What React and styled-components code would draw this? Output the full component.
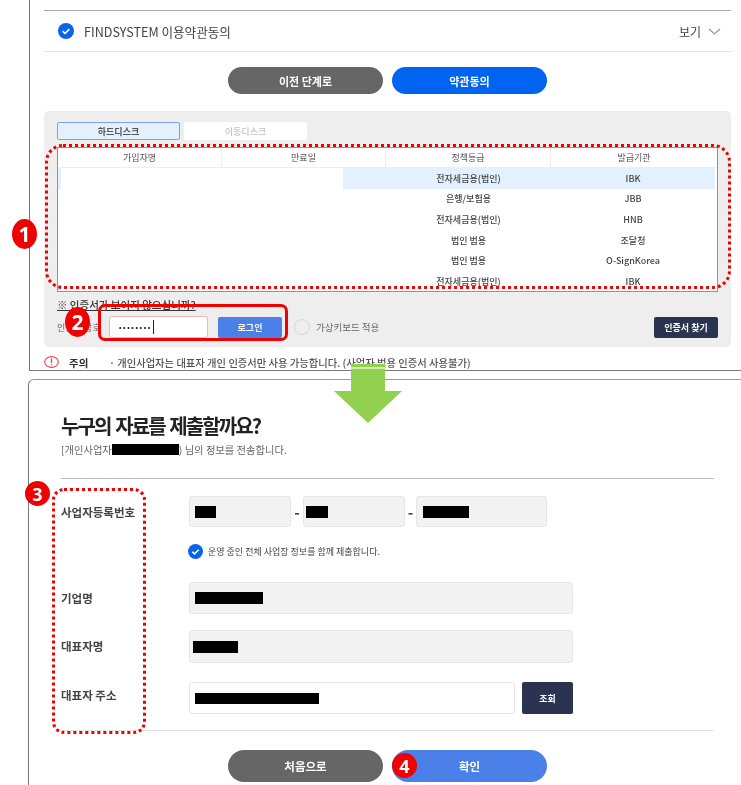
import React from 'react'
import styled, { createGlobalStyle } from 'styled-components'

const GlobalStyle = createGlobalStyle`
  html, body {
    margin: 0;
    padding: 0;
    background: #fff;
  }
  * {
    box-sizing: border-box;
  }
`

const Page = styled.div`
  position: relative;
  width: 741px;
  height: 785px;
  overflow: hidden;
  background: #fff;
  color: #333;
  font-family: 'Noto Sans CJK KR', 'Noto Sans', sans-serif;
  filter: blur(0.4px);
`

const TopFrame = styled.section`
  height: 371px;
  margin-left: 29px;
  padding: 10px 10px 0 14px;
  border-left: 1px solid #777;
  border-bottom: 1px solid #777;
`

const TermsRow = styled.div`
  display: flex;
  align-items: center;
  height: 42px;
  padding: 0 10px 0 14px;
  border-top: 1px solid #aaa;
  border-bottom: 1px solid #e4e4e4;
  font-size: 12.6px;
  color: #444;
`

const TermsText = styled.span`
  margin-left: 10px;
  flex: 1;
`

const ViewLabel = styled.span`
  display: flex;
  align-items: center;
  gap: 7px;
  font-size: 12px;
`

const ButtonRow = styled.div`
  display: flex;
  justify-content: center;
  gap: 9px;
  margin-top: ${p => p.$top}px;
`

const PillButton = styled.button`
  width: 155px;
  height: ${p => p.$height}px;
  border: 0;
  border-radius: 16px;
  padding: 0;
  background: ${p => p.$bg};
  color: #fff;
  font: 700 ${p => p.$size}px 'Noto Sans CJK KR', sans-serif;
`

const CertPanel = styled.div`
  height: 236px;
  margin-top: 17px;
  padding: 11px 13px 0;
  background: #eee;
  border-radius: 5px;
`

const Tabs = styled.div`
  display: flex;
  gap: 4px;
`

const Tab = styled.div`
  display: flex;
  align-items: center;
  justify-content: center;
  width: 123px;
  height: 18px;
  border-radius: 2px;
  font-size: 9px;
  font-weight: ${p => (p.$active ? 700 : 500)};
  color: ${p => (p.$active ? '#555' : '#c4c4c4')};
  background: ${p => (p.$active ? '#e3f0fd' : '#fff')};
  border: 1px solid ${p => (p.$active ? '#7ba4e6' : '#fff')};
`

const CertTable = styled.div`
  height: 145px;
  margin-top: 7px;
  overflow: hidden;
  background: #fff;
  border: 1px solid #6d95e2;
`

const HeadRow = styled.div`
  display: grid;
  grid-template-columns: 164px 164px 165px 1fr;
  height: 20px;
  border-bottom: 1px solid #eee;
`

const HeadCell = styled.div`
  display: flex;
  align-items: center;
  justify-content: center;
  font-size: 9px;
  color: #555;
  border-right: 1px solid #eee;
  &:last-child {
    border-right: 0;
  }
`

const BodyRow = styled.div`
  display: grid;
  grid-template-columns: 164px 164px 165px 1fr;
  height: 20.6px;
  margin-right: 2px;
  background: ${p =>
    p.$selected
      ? 'linear-gradient(to right, #e3f0fd 3px, #fff 3px, #fff 285px, #e3f0fd 285px)'
      : '#fff'};
`

const BodyCell = styled.div`
  display: flex;
  align-items: center;
  justify-content: center;
  font-size: 9px;
  font-weight: 500;
  color: #444;
`

const HelpLink = styled.div`
  height: 16px;
  margin-top: 5px;
  font-size: 10.5px;
  font-weight: 500;
  line-height: 16px;
  color: #333;
  text-decoration: underline;
`

const LoginRow = styled.div`
  display: flex;
  align-items: center;
  height: 22px;
  margin-top: 3px;
`

const PasswordLabel = styled.span`
  width: 52px;
  font-size: 9px;
  color: #666;
  white-space: nowrap;
`

const PasswordBox = styled.div`
  display: flex;
  align-items: center;
  width: 99px;
  height: 22px;
  padding-left: 7px;
  background: #fff;
  border: 1px solid #f3b6b6;
  border-radius: 3px;
  font-size: 11px;
  font-weight: 700;
  letter-spacing: -2.4px;
  color: #222;
`

const Caret = styled.i`
  width: 1px;
  height: 14px;
  margin-left: 3px;
  background: #222;
`

const SquareButton = styled.button`
  width: ${p => p.$width}px;
  height: ${p => p.$height || 21}px;
  margin-left: ${p => p.$left || 0}px;
  padding: 0;
  border: 0;
  border-radius: 2px;
  background: ${p => p.$bg};
  color: #fff;
  font: 700 9px 'Noto Sans CJK KR', sans-serif;
`

const Radio = styled.span`
  width: 16px;
  height: 16px;
  margin-left: 12px;
  border: 1px solid #d4d4d4;
  border-radius: 50%;
`

const RadioLabel = styled.span`
  margin-left: 6px;
  font-size: 9.5px;
  color: #666;
`

const Spacer = styled.span`
  flex: 1;
`

const Notice = styled.div`
  display: flex;
  align-items: center;
  height: 16px;
  margin-top: 7px;
  font-size: 10.3px;
  font-weight: 500;
  color: #555;
  white-space: pre;
`

const NoticeTitle = styled.b`
  margin: 0 5px 0 10px;
  width: 35px;
  font-size: 10.5px;
  color: #333;
`

const FormFrame = styled.section`
  height: 420px;
  margin: 8px 0 0 28px;
  padding: 31px 27px 0 32px;
  border-left: 1px solid #777;
  border-top: 1px solid #999;
  border-top-left-radius: 6px;
`

const Title = styled.h1`
  margin: 0;
  height: 30px;
  font-size: 20px;
  line-height: 30px;
  font-weight: 700;
  letter-spacing: -1.9px;
  word-spacing: 2px;
  color: #222;
`

const SubTitle = styled.p`
  display: flex;
  align-items: center;
  margin: 0;
  height: 16px;
  font-size: 10.3px;
  color: #666;
  white-space: pre;
`

const Rule = styled.hr`
  margin: ${p => p.$top}px 0 0;
  height: 1px;
  border: 0;
  background: ${p => p.$color};
`

const FieldRow = styled.div`
  display: flex;
  align-items: center;
  height: ${p => p.$height}px;
  margin-top: ${p => p.$top}px;
`

const FieldLabel = styled.label`
  width: 128px;
  flex: none;
  margin-bottom: ${p => p.$lift || 0}px;
  font-size: 11.5px;
  font-weight: 700;
  color: #444;
`

const Field = styled.div`
  display: flex;
  align-items: center;
  width: ${p => p.$width}px;
  height: 100%;
  padding-left: ${p => p.$inset || 5}px;
  background: ${p => (p.$white ? '#fff' : '#f2f2f2')};
  border: 1px solid #e6e6e6;
  border-radius: 3px;
`

const Dash = styled.span`
  width: ${p => p.$width}px;
  text-align: center;
  font-size: 15px;
  font-weight: 700;
  line-height: 12px;
  color: #444;
`

const Redacted = styled.span`
  display: inline-block;
  width: ${p => p.$width}px;
  height: ${p => p.$height}px;
  background: #000;
`

const Agree = styled.div`
  display: flex;
  align-items: center;
  height: 16px;
  margin: 16px 0 0 127px;
  font-size: 9px;
  color: #444;
`

const AgreeText = styled.span`
  margin-left: 5px;
`

// pieces drawn over the screenshots: red notes and the arrow between them
const DottedNote = styled.div`
  position: absolute;
  left: ${p => p.$x}px;
  top: ${p => p.$y}px;
  width: ${p => p.$w}px;
  height: ${p => p.$h}px;
  border: 3px dotted #f00000;
  border-radius: ${p => p.$radius}px;
`

const SolidNote = styled.div`
  position: absolute;
  left: 98px;
  top: 304px;
  width: 190px;
  height: 37px;
  border: 3px solid #f00000;
  border-radius: 7px;
`

const Badge = styled.div`
  position: absolute;
  left: ${p => p.$x}px;
  top: ${p => p.$y}px;
  display: flex;
  align-items: center;
  justify-content: center;
  width: 25px;
  height: ${p => p.$h}px;
  border-radius: 50%;
  background: #f00000;
  color: #fff;
  font: 700 ${p => p.$size}px 'Noto Sans', sans-serif;
`

const ArrowMark = styled.svg`
  position: absolute;
  left: 334px;
  top: 362px;
`

const CheckCircle = ({ size = 16 }) => (
  <svg width={size} height={size} viewBox="0 0 16 16">
    <circle cx="8" cy="8" r="8" fill="#0a64e8" />
    <path d="M4.6 8.2l2.4 2.3 4.4-4.4" fill="none" stroke="#fff" strokeWidth="1.6" />
  </svg>
)

const Chevron = () => (
  <svg width="13" height="7" viewBox="0 0 13 7">
    <path d="M1 1l5.5 5L12 1" fill="none" stroke="#999" strokeWidth="1.2" />
  </svg>
)

const WarnIcon = () => (
  <svg width="15" height="12" viewBox="0 0 15 12">
    <ellipse cx="7.5" cy="6" rx="6.8" ry="5.4" fill="#fff" stroke="#e8404a" strokeWidth="1.1" />
    <path d="M7.5 2.5v4.6M7.5 8.2v1.3" stroke="#e8404a" strokeWidth="1.3" />
  </svg>
)

const Arrow = () => (
  <ArrowMark width="68" height="62" viewBox="0 0 68 62">
    <path d="M17 2h34v27h17L34 61 0 29h17z" fill="#92d050" />
    <path d="M17 6h34" stroke="#fff" strokeWidth="1.5" opacity="0.8" />
  </ArrowMark>
)

const certRows = [
  ['전자세금용(법인)', 'IBK'],
  ['은행/보험용', 'JBB'],
  ['전자세금용(법인)', 'HNB'],
  ['법인 범용', '조달청'],
  ['법인 범용', 'O-SignKorea'],
  ['전자세금용(법인)', 'IBK'],
]

function App() {
  return (
    <Page>
      <GlobalStyle />
      <TopFrame>
        <TermsRow>
          <CheckCircle />
          <TermsText>FINDSYSTEM 이용약관동의</TermsText>
          <ViewLabel>
            보기 <Chevron />
          </ViewLabel>
        </TermsRow>
        <ButtonRow $top={15}>
          <PillButton $bg="#666" $height={27} $size={11}>이전 단계로</PillButton>
          <PillButton $bg="#0064f0" $height={27} $size={11}>약관동의</PillButton>
        </ButtonRow>
        <CertPanel>
          <Tabs>
            <Tab $active>하드디스크</Tab>
            <Tab>이동디스크</Tab>
          </Tabs>
          <CertTable>
            <HeadRow>
              <HeadCell>가입자명</HeadCell>
              <HeadCell>만료일</HeadCell>
              <HeadCell>정책등급</HeadCell>
              <HeadCell>발급기관</HeadCell>
            </HeadRow>
            {certRows.map(([grade, issuer], i) => (
              <BodyRow key={i} $selected={i === 0}>
                <BodyCell />
                <BodyCell />
                <BodyCell>{grade}</BodyCell>
                <BodyCell>{issuer}</BodyCell>
              </BodyRow>
            ))}
          </CertTable>
          <HelpLink>※ 인증서가 보이지 않으십니까?</HelpLink>
          <LoginRow>
            <PasswordLabel>인증서 암호</PasswordLabel>
            <PasswordBox>
              ········
              <Caret />
            </PasswordBox>
            <SquareButton $width={64} $left={10} $bg="#4a80e8">로그인</SquareButton>
            <Radio />
            <RadioLabel>가상키보드 적용</RadioLabel>
            <Spacer />
            <SquareButton $width={64} $bg="#2a3350">인증서 찾기</SquareButton>
          </LoginRow>
        </CertPanel>
        <Notice>
          <WarnIcon />
          <NoticeTitle>주의</NoticeTitle>
          {'· 개인사업자는 대표자 개인 인증서만 사용 가능합니다. (사업자 범용 인증서 사용불가)'}
        </Notice>
      </TopFrame>

      <FormFrame>
        <Title>누구의 자료를 제출할까요?</Title>
        <SubTitle>
          [개인사업자<Redacted $width={67} $height={11} />) 님의 정보를 전송합니다.
        </SubTitle>
        <Rule $top={21} $color="#bbb" />

        <FieldRow $height={31} $top={17}>
          <FieldLabel>사업자등록번호</FieldLabel>
          <Field $width={102}><Redacted $width={21} $height={12} /></Field>
          <Dash $width={12}>-</Dash>
          <Field $width={102} $inset={2}><Redacted $width={22} $height={12} /></Field>
          <Dash $width={11}>-</Dash>
          <Field $width={131} $inset={6}><Redacted $width={46} $height={12} /></Field>
        </FieldRow>
        <Agree>
          <CheckCircle size={15} />
          <AgreeText>운영 중인 전체 사업장 정보를 함께 제출합니다.</AgreeText>
        </Agree>
        <FieldRow $height={32} $top={23}>
          <FieldLabel>기업명</FieldLabel>
          <Field $width={384}><Redacted $width={68} $height={12} /></Field>
        </FieldRow>
        <FieldRow $height={33} $top={16}>
          <FieldLabel $lift={2}>대표자명</FieldLabel>
          <Field $width={384} $inset={3}><Redacted $width={45} $height={12} /></Field>
        </FieldRow>
        <FieldRow $height={32} $top={19}>
          <FieldLabel $lift={6}>대표자 주소</FieldLabel>
          <Field $width={326} $white><Redacted $width={124} $height={11} /></Field>
          <SquareButton $width={51} $height={32} $left={7} $bg="#2a3350">조회</SquareButton>
        </FieldRow>
        <Rule $top={16} $color="#e2e2e2" />
        <ButtonRow $top={19}>
          <PillButton $bg="#666" $height={32} $size={11.5}>처음으로</PillButton>
          <PillButton $bg="#4a80e8" $height={32} $size={11.5}>확인</PillButton>
        </ButtonRow>
      </FormFrame>

      <Arrow />
      <DottedNote $x={45} $y={144} $w={686} $h={145} $radius={18} />
      <SolidNote />
      <DottedNote $x={52} $y={488} $w={94} $h={246} $radius={12} />
      <Badge $x={12} $y={219} $h={30} $size={21}>1</Badge>
      <Badge $x={65} $y={307} $h={30} $size={21}>2</Badge>
      <Badge $x={25} $y={481} $h={25} $size={18}>3</Badge>
      <Badge $x={392} $y={753} $h={25} $size={18}>4</Badge>
    </Page>
  )
}

export default App
